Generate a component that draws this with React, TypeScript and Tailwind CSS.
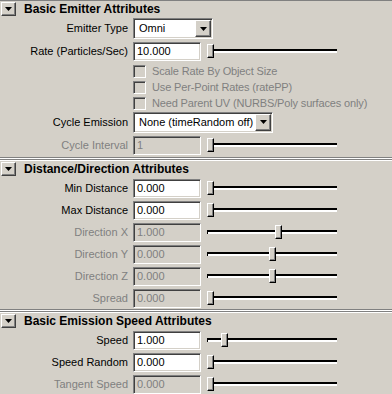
import React from 'react';

const sunken =
  'border border-t-[#808080] border-l-[#808080] border-r-white border-b-white shadow-[inset_1px_1px_0_#404040,inset_-1px_-1px_0_#d4d0c8]';
const raised =
  'border border-t-white border-l-white border-r-[#404040] border-b-[#404040] shadow-[inset_-1px_-1px_0_#808080]';

function Tri() {
  return (
    <svg width="7" height="4" viewBox="0 0 7 4">
      <polygon points="0,0 7,0 3.5,4" fill="#000" />
    </svg>
  );
}

function ArrowBtn({ cls }: { cls: string }) {
  return (
    <div className={`flex items-center justify-center bg-[#d4d0c8] ${raised} ${cls}`}>
      <Tri />
    </div>
  );
}

function Header({ title }: { title: string }) {
  return (
    <div className="flex items-center h-[16px] pl-px">
      <ArrowBtn cls="w-[15px] h-[14px]" />
      <span className="ml-[8px] text-[12px] font-bold text-black">{title}</span>
    </div>
  );
}

function Separator() {
  return (
    <div className="flex flex-col">
      <div className="h-px bg-[#808080]" />
      <div className="h-px bg-white" />
      <div className="h-px bg-[#808080]" />
      <div className="h-px bg-white" />
    </div>
  );
}

function Slider({ pos }: { pos: number }) {
  return (
    <div className="relative w-[130px] h-[14px]">
      <div className="absolute left-0 right-0 top-[5px] h-[4px] bg-white border-t-2 border-l border-t-black border-l-black" />
      <div
        className="absolute top-0 w-[7px] h-[14px] bg-[#d4d0c8] border border-t-white border-l-white border-r-black border-b-black shadow-[inset_-1px_-1px_0_#808080]"
        style={{ left: pos }}
      />
    </div>
  );
}

function Label({ text, off }: { text: string; off?: boolean }) {
  return (
    <div className={`w-[128px] text-right ${off ? 'text-[#808080]' : 'text-black'}`}>{text}</div>
  );
}

function FieldRow({ label, value, pos, off, h = 'h-[22px]' }: { label: string; value: string; pos: number; off?: boolean; h?: string }) {
  return (
    <div className={`flex items-center ${h}`}>
      <Label text={label} off={off} />
      <div
        className={`ml-[5px] w-[68px] h-[19px] flex items-center pl-[3px] ${sunken} ${off ? 'bg-[#d4d0c8] text-[#808080]' : 'bg-white text-black'}`}
      >
        {value}
      </div>
      <div className="ml-[6px]">
        <Slider pos={pos} />
      </div>
    </div>
  );
}

function Dropdown({ label, value, w }: { label: string; value: string; w: string }) {
  return (
    <div className="flex items-center h-full">
      <Label text={label} />
      <div className={`ml-[5px] ${w} h-[21px] flex items-center bg-white ${sunken}`}>
        <span className="flex-1 pl-[5px] text-black">{value}</span>
        <ArrowBtn cls="w-[16px] h-[17px] mr-px" />
      </div>
    </div>
  );
}

function Check({ text }: { text: string }) {
  return (
    <div className="flex items-center h-[16px] pl-[133px]">
      <div className={`w-[13px] h-[13px] bg-[#d4d0c8] ${sunken}`} />
      <span className="ml-[6px] text-[#808080] tracking-[-0.15px]">{text}</span>
    </div>
  );
}

export default function App() {
  return (
    <div className="w-[392px] h-[394px] overflow-hidden bg-[#d4d0c8] font-['Liberation_Sans',Arial,sans-serif] text-[11px] leading-none select-none">
      <div className="h-px bg-[#808080]" />
      <Header title="Basic Emitter Attributes" />
      <div className="h-[23px]">
        <Dropdown label="Emitter Type" value="Omni" w="w-[80px]" />
      </div>
      <FieldRow label="Rate (Particles/Sec)" value="10.000" pos={0} />
      <div className="pt-px">
        <Check text="Scale Rate By Object Size" />
        <Check text="Use Per-Point Rates (ratePP)" />
        <Check text="Need Parent UV (NURBS/Poly surfaces only)" />
      </div>
      <div className="h-[22px]">
        <Dropdown label="Cycle Emission" value="None (timeRandom off)" w="w-[140px]" />
      </div>
      <FieldRow label="Cycle Interval" value="1" pos={0} off h="h-[24px]" />

      <Separator />
      <Header title="Distance/Direction Attributes" />
      <FieldRow label="Min Distance" value="0.000" pos={0} />
      <FieldRow label="Max Distance" value="0.000" pos={0} />
      <FieldRow label="Direction X" value="1.000" pos={68} off />
      <FieldRow label="Direction Y" value="0.000" pos={62} off />
      <FieldRow label="Direction Z" value="0.000" pos={62} off />
      <FieldRow label="Spread" value="0.000" pos={0} off />

      <Separator />
      <Header title="Basic Emission Speed Attributes" />
      <FieldRow label="Speed" value="1.000" pos={14} />
      <FieldRow label="Speed Random" value="0.000" pos={0} />
      <FieldRow label="Tangent Speed" value="0.000" pos={0} off />
    </div>
  );
}
